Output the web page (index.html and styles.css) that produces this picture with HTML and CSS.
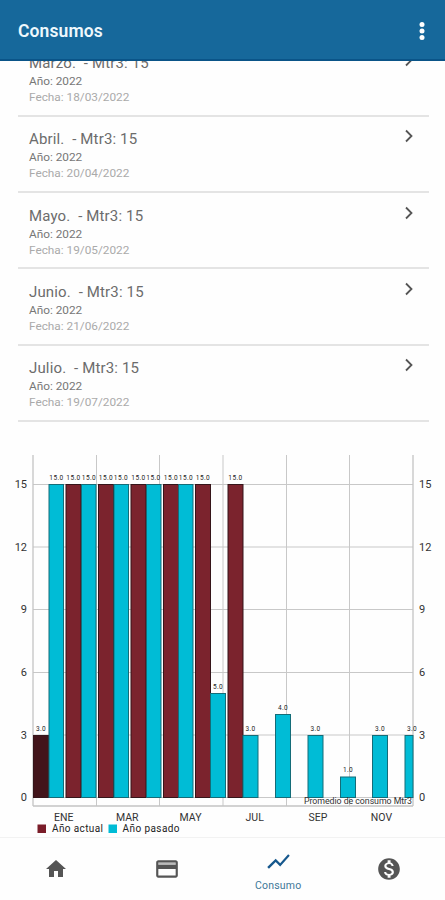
FILE: index.html
```
<!DOCTYPE html>
<html lang="es">
<head>
    <meta charset="UTF-8">
    <meta name="viewport" content="width=device-width, initial-scale=1.0">
    <title>Consumos</title>
    <link rel="stylesheet" href="styles.css">
</head>
<body>
    <header class="toolbar">
        <h1>Consumos</h1>
        <svg class="more" width="6" height="20" viewBox="0 0 6 20">
            <circle cx="3" cy="3.5" r="2.5"/>
            <circle cx="3" cy="10" r="2.5"/>
            <circle cx="3" cy="16.5" r="2.5"/>
        </svg>
    </header>

    <main>
        <div class="list-window">
            <ul class="list">
                <li class="item">
                    <div>
                        <h2>Marzo. &nbsp;- Mtr3: 15</h2>
                        <p class="year">Año: 2022</p>
                        <p class="date">Fecha: 18/03/2022</p>
                    </div>
                    <svg class="chevron" viewBox="0 0 10 14"><path d="M2 1.5l5.5 5.5L2 12.5"/></svg>
                </li>
                <li class="item">
                    <div>
                        <h2>Abril. &nbsp;- Mtr3: 15</h2>
                        <p class="year">Año: 2022</p>
                        <p class="date">Fecha: 20/04/2022</p>
                    </div>
                    <svg class="chevron" viewBox="0 0 10 14"><path d="M2 1.5l5.5 5.5L2 12.5"/></svg>
                </li>
                <li class="item">
                    <div>
                        <h2>Mayo. &nbsp;- Mtr3: 15</h2>
                        <p class="year">Año: 2022</p>
                        <p class="date">Fecha: 19/05/2022</p>
                    </div>
                    <svg class="chevron" viewBox="0 0 10 14"><path d="M2 1.5l5.5 5.5L2 12.5"/></svg>
                </li>
                <li class="item">
                    <div>
                        <h2>Junio. &nbsp;- Mtr3: 15</h2>
                        <p class="year">Año: 2022</p>
                        <p class="date">Fecha: 21/06/2022</p>
                    </div>
                    <svg class="chevron" viewBox="0 0 10 14"><path d="M2 1.5l5.5 5.5L2 12.5"/></svg>
                </li>
                <li class="item">
                    <div>
                        <h2>Julio. &nbsp;- Mtr3: 15</h2>
                        <p class="year">Año: 2022</p>
                        <p class="date">Fecha: 19/07/2022</p>
                    </div>
                    <svg class="chevron" viewBox="0 0 10 14"><path d="M2 1.5l5.5 5.5L2 12.5"/></svg>
                </li>
            </ul>
        </div>

        <svg class="chart" width="445" height="387" viewBox="0 450 445 387">
            <!-- grid -->
            <path class="grid" d="M33 484.5H413M33 547H413M33 609.5H413M33 672.5H413M33 735H413M33 797.5H413M96.5 455V806M159.5 455V806M223 455V806M286.5 455V806M349.5 455V806"/>
            <path class="axis" d="M33 455V806M413 455V806M33 806H413"/>

            <!-- año actual -->
            <g class="current">
                <rect class="selected" x="33.5" y="735.5" width="15" height="62"/>
                <rect x="66" y="484.5" width="15" height="313"/>
                <rect x="98.5" y="484.5" width="15" height="313"/>
                <rect x="131" y="484.5" width="15" height="313"/>
                <rect x="163.5" y="484.5" width="15" height="313"/>
                <rect x="195.5" y="484.5" width="15" height="313"/>
                <rect x="228" y="484.5" width="15" height="313"/>
            </g>

            <!-- año pasado -->
            <g class="previous">
                <rect x="49" y="484.5" width="14.5" height="313"/>
                <rect x="81.5" y="484.5" width="14.5" height="313"/>
                <rect x="114" y="484.5" width="14.5" height="313"/>
                <rect x="146.5" y="484.5" width="14.5" height="313"/>
                <rect x="178.5" y="484.5" width="14.5" height="313"/>
                <rect x="210.5" y="693.5" width="15" height="104"/>
                <rect x="243" y="735.5" width="15" height="62"/>
                <rect x="275.5" y="714.5" width="15" height="83"/>
                <rect x="308" y="735.5" width="15" height="62"/>
                <rect x="340.5" y="777" width="15" height="20.5"/>
                <rect x="372.5" y="735.5" width="15" height="62"/>
                <rect x="405" y="735.5" width="8" height="62"/>
            </g>

            <g class="values">
                <text x="41" y="730.5">3.0</text>
                <text x="56.5" y="480">15.0</text>
                <text x="73.5" y="480">15.0</text>
                <text x="89" y="480">15.0</text>
                <text x="106" y="480">15.0</text>
                <text x="121" y="480">15.0</text>
                <text x="138.5" y="480">15.0</text>
                <text x="153.5" y="480">15.0</text>
                <text x="171" y="480">15.0</text>
                <text x="186" y="480">15.0</text>
                <text x="203" y="480">15.0</text>
                <text x="235.5" y="480">15.0</text>
                <text x="218" y="688.5">5.0</text>
                <text x="250.5" y="730.5">3.0</text>
                <text x="283" y="709.5">4.0</text>
                <text x="315.5" y="730.5">3.0</text>
                <text x="348" y="772">1.0</text>
                <text x="380" y="730.5">3.0</text>
                <text x="412" y="730.5">3.0</text>
            </g>

            <g class="scale left">
                <text x="27" y="487.5">15</text>
                <text x="27" y="550.5">12</text>
                <text x="27" y="613">9</text>
                <text x="27" y="675.5">6</text>
                <text x="27" y="738.5">3</text>
                <text x="27" y="801">0</text>
            </g>
            <g class="scale">
                <text x="419" y="487.5">15</text>
                <text x="419" y="550.5">12</text>
                <text x="419" y="613">9</text>
                <text x="419" y="675.5">6</text>
                <text x="419" y="738.5">3</text>
                <text x="419" y="801">0</text>
            </g>

            <g class="months">
                <text x="63.7" y="820.5">ENE</text>
                <text x="127.3" y="820.5">MAR</text>
                <text x="190.5" y="820.5">MAY</text>
                <text x="254.7" y="820.5">JUL</text>
                <text x="318" y="820.5">SEP</text>
                <text x="381.5" y="820.5">NOV</text>
            </g>

            <text class="description" x="304" y="804" textLength="108">Promedio de consumo Mtr3</text>

            <!-- legend -->
            <rect x="37.5" y="824.5" width="8.5" height="8.5" fill="#7a1d29"/>
            <text class="legend" x="52" y="832" textLength="51">Año actual</text>
            <rect x="108.5" y="824.5" width="8.5" height="8.5" fill="#00bcd6"/>
            <text class="legend" x="122.5" y="832" textLength="57">Año pasado</text>
        </svg>
    </main>

    <nav class="tabs">
        <a class="tab">
            <svg width="24" height="24" viewBox="0 0 24 24"><path d="M10 20v-6h4v6h5v-8h3L12 3 2 12h3v8z"/></svg>
        </a>
        <a class="tab">
            <svg width="26" height="26" viewBox="0 0 24 24"><path d="M4 6h16v2H4z" fill="#bbb"/><path d="M20 4H4c-1.11 0-1.99.89-1.99 2L2 18c0 1.11.89 2 2 2h16c1.11 0 2-.89 2-2V6c0-1.11-.89-2-2-2zm0 14H4v-6h16v6zm0-10H4V6h16v2z"/></svg>
        </a>
        <a class="tab active">
            <svg width="27" height="27" viewBox="0 0 24 24"><path d="M3.5 18.49l6-6.01 4 4L22 6.92l-1.41-1.41-7.09 7.97-4-4L2 16.99z"/></svg>
            <span>Consumo</span>
        </a>
        <a class="tab">
            <svg width="26" height="26" viewBox="0 0 24 24"><path d="M12 2C6.48 2 2 6.48 2 12s4.48 10 10 10 10-4.48 10-10S17.52 2 12 2zm1.41 16.09V20h-2.67v-1.93c-1.71-.36-3.16-1.46-3.27-3.4h1.96c.1 1.05.82 1.87 2.65 1.87 1.96 0 2.4-.98 2.4-1.59 0-.83-.44-1.61-2.67-2.14-2.48-.6-4.18-1.62-4.18-3.67 0-1.72 1.39-2.84 3.11-3.21V4h2.67v1.95c1.86.45 2.79 1.86 2.85 3.39H14.3c-.05-1.11-.64-1.87-2.22-1.87-1.5 0-2.4.68-2.4 1.64 0 .84.65 1.39 2.67 1.91s4.18 1.39 4.18 3.91c-.01 1.83-1.38 2.83-3.12 3.16z"/></svg>
        </a>
    </nav>
</body>
</html>
```

FILE: styles.css
```
* {
    box-sizing: border-box;
}
body {
    margin: 0;
    height: 900px;
    display: flex;
    flex-direction: column;
    overflow: hidden;
    background: #fefefe;
    font-family: Roboto, sans-serif;
}
.toolbar {
    height: 61px;
    flex: none;
    display: flex;
    align-items: center;
    justify-content: space-between;
    padding: 3px 20px 0 18px;
    background: #16689b;
    border-bottom: 2px solid #0a5488;
}
.toolbar h1 {
    margin: 0;
    font-size: 17.5px;
    font-weight: 600;
    letter-spacing: 0.1px;
    color: #eef8fd;
}
.more {
    fill: #fff;
}
main {
    height: 776px;
    flex: none;
}
/* the list is scrolled, the first row is cut by the toolbar */
.list-window {
    height: 389px;
    overflow: hidden;
    display: flex;
    flex-direction: column;
}
.list {
    list-style: none;
    margin: -20.5px 0 0;
    padding: 0 16px 0 18px;
}
.item {
    height: 76.25px;
    display: flex;
    justify-content: space-between;
    padding: 12.5px 15px 0 11px;
    border-bottom: 2px solid #e4e4e4;
}
.item h2 {
    margin: 0;
    font-size: 15px;
    line-height: 20px;
    font-weight: 400;
    letter-spacing: 0.15px;
    color: #6c6c6c;
}
.item p {
    margin: 0;
    font-size: 11.8px;
    line-height: 16px;
}
.item .year {
    color: #777;
}
.item .date {
    color: #aaa;
}
.chevron {
    width: 10px;
    height: 14px;
    fill: none;
    stroke: #555;
    stroke-width: 1.8;
}
.chart {
    display: block;
}
.grid {
    fill: none;
    stroke: #c8c8c8;
}
.axis {
    fill: none;
    stroke: #c4c4c4;
    stroke-width: 1.3;
}
.current rect {
    fill: #7b232d;
    stroke: #35151a;
}
.current .selected {
    fill: #42141a;
}
.previous rect {
    fill: #00bcd6;
    stroke: #146c78;
}
.values text {
    font-size: 6.5px;
    letter-spacing: 0.4px;
    text-anchor: middle;
    fill: #222;
}
.scale text {
    font-size: 11px;
    fill: #333;
}
.scale.left text {
    text-anchor: end;
}
.months text {
    font-size: 10.5px;
    text-anchor: middle;
    fill: #333;
}
.description {
    font-size: 8.8px;
    fill: #333;
}
.legend {
    font-size: 10px;
    fill: #222;
}
.tabs {
    flex: 1;
    display: grid;
    grid-template-columns: repeat(4, 1fr);
    border-top: 1px solid #f2f2f2;
}
.tab {
    display: flex;
    flex-direction: column;
    align-items: center;
    justify-content: center;
    fill: #555;
}
.tab.active {
    fill: #16588d;
    color: #3f7899;
    font-size: 10.5px;
    letter-spacing: 0.2px;
}
.tab.active svg {
    margin-top: 2px;
}
.tab.active span {
    margin-top: 4px;
}
```
